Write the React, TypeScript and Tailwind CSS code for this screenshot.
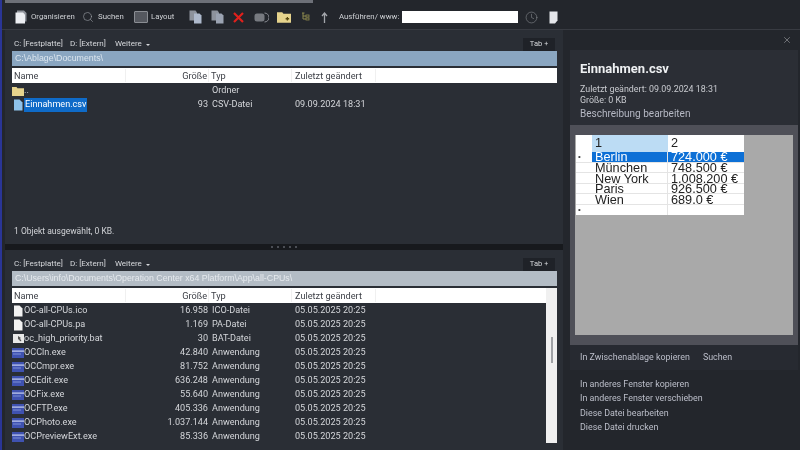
import { Clock, Search, X } from 'lucide-react'

type FileRow = {
  name: string
  size: string
  type: string
  date: string
  icon: 'page' | 'bat' | 'exe'
}

const lowerFiles: FileRow[] = [
  { name: 'OC-all-CPUs.ico', size: '16.958', type: 'ICO-Datei', date: '05.05.2025 20:25', icon: 'page' },
  { name: 'OC-all-CPUs.pa', size: '1.169', type: 'PA-Datei', date: '05.05.2025 20:25', icon: 'page' },
  { name: 'oc_high_priority.bat', size: '30', type: 'BAT-Datei', date: '05.05.2025 20:25', icon: 'bat' },
  { name: 'OCCln.exe', size: '42.840', type: 'Anwendung', date: '05.05.2025 20:25', icon: 'exe' },
  { name: 'OCCmpr.exe', size: '81.752', type: 'Anwendung', date: '05.05.2025 20:25', icon: 'exe' },
  { name: 'OCEdit.exe', size: '636.248', type: 'Anwendung', date: '05.05.2025 20:25', icon: 'exe' },
  { name: 'OCFix.exe', size: '55.640', type: 'Anwendung', date: '05.05.2025 20:25', icon: 'exe' },
  { name: 'OCFTP.exe', size: '405.336', type: 'Anwendung', date: '05.05.2025 20:25', icon: 'exe' },
  { name: 'OCPhoto.exe', size: '1.037.144', type: 'Anwendung', date: '05.05.2025 20:25', icon: 'exe' },
  { name: 'OCPreviewExt.exe', size: '85.336', type: 'Anwendung', date: '05.05.2025 20:25', icon: 'exe' },
]

const csvRows = [
  ['Berlin', '724.000 €'],
  ['München', '748.500 €'],
  ['New York', '1.008.200 €'],
  ['Paris', '926.500 €'],
  ['Wien', '689.0 €'],
]

function PageIcon({ color = '#f2f2f2' }: { color?: string }) {
  return (
    <svg width="10" height="12" viewBox="0 0 10 12" className="shrink-0">
      <path d="M1 0.5h5.5L9.5 3.5V11.5H1z" fill={color} />
    </svg>
  )
}

function BatIcon() {
  return (
    <svg width="11" height="9" viewBox="0 0 11 9" className="shrink-0">
      <rect width="11" height="9" fill="#e8e8e8" />
      <path d="M5 2l3 2-1 .6L8.5 7 7 7.3 5.8 5 5 6z" fill="#555" />
    </svg>
  )
}

function ExeIcon() {
  return (
    <svg width="12" height="10" viewBox="0 0 12 10" className="shrink-0">
      <rect width="12" height="10" fill="#3f52b0" />
      <rect y="2.5" width="12" height="1.2" fill="#c9d2f2" />
      <rect x="1" y="5.5" width="8" height="1" fill="#7f8fd6" />
    </svg>
  )
}

function FolderIcon({ plus = false, size = 12 }: { plus?: boolean; size?: number }) {
  return (
    <svg width={size} height={size - 2} viewBox="0 0 12 10" className="shrink-0">
      <path d="M0 1h4.5l1 1.3H12V10H0z" fill="#e6d38c" />
      {plus && <path d="M7.4 6.5h3M8.9 5v3" stroke="#5a4a10" strokeWidth="1.1" />}
    </svg>
  )
}

function CopyIcon({ tone = '#aeb9cc' }: { tone?: string }) {
  return (
    <svg width="13" height="14" viewBox="0 0 13 14" className="shrink-0">
      <path d="M0.5 0.5h6l1.5 2v8h-7.5z" fill="#8d929c" />
      <path d="M5 3.5h5.5l2 2v8H5z" fill={tone} />
    </svg>
  )
}

function PanelHeader({ path, pathClass }: { path: string; pathClass: string }) {
  return (
    <>
      <div className="flex h-[14px] items-center gap-[7px] px-[2px] text-[8px] text-[#d6d8dc]">
        <span>C: [Festplatte]</span>
        <span>D: [Extern]</span>
        <span className="ml-[2px] flex items-center gap-[4px]">
          Weitere
          <span className="mt-[1px] border-x-[2.5px] border-t-[2.5px] border-x-transparent border-t-[#d6d8dc]" />
        </span>
        <span className="ml-auto flex h-[13px] w-[32px] items-center justify-center gap-[2px] bg-[#1f2228] text-[7.5px]">
          Tab <span className="text-[7px]">+</span>
        </span>
      </div>
      <div
        className={`flex h-[15px] items-center pl-[3px] font-['Liberation_Sans',Arial,sans-serif] text-[8.8px] ${pathClass}`}
      >
        {path}
      </div>
    </>
  )
}

function ColumnHeader() {
  return (
    <div className="flex h-[15px] items-center bg-white text-[9.2px] text-[#3c3f46]">
      <span className="w-[114px] border-r border-[#f0f0f0] pl-[2px]">Name</span>
      <span className="w-[83px] border-r border-[#f0f0f0] pr-[1px] text-right">Größe</span>
      <span className="w-[83px] border-r border-[#f0f0f0] pl-[2px]">Typ</span>
      <span className="w-[84px] border-r border-[#f0f0f0] pl-[3px]">Zuletzt geändert</span>
    </div>
  )
}

function Row({ file }: { file: FileRow }) {
  return (
    <div className="flex h-[14px] items-center text-[9.1px] text-[#d4d6da]">
      <div className="flex w-[114px] items-center">
        <span className="flex w-[12px] justify-center">
          {file.icon === 'page' && <PageIcon />}
          {file.icon === 'bat' && <BatIcon />}
          {file.icon === 'exe' && <ExeIcon />}
        </span>
        <span className="whitespace-nowrap">{file.name}</span>
      </div>
      <span className="w-[83px] pr-[1px] text-right">{file.size}</span>
      <span className="w-[83px] pl-[3px]">{file.type}</span>
      <span className="pl-[3px]">{file.date}</span>
    </div>
  )
}

export default function App() {
  return (
    <div className="flex h-[450px] w-[800px] flex-col overflow-hidden border-l-2 border-[#2a3596] bg-[#23262c] font-['Roboto','Noto_Sans',sans-serif] blur-[0.3px]">
      <div className="ml-[3px] h-[3px] w-[308px] shrink-0 bg-[#6d7078]" />

      <header className="flex h-[27px] shrink-0 items-center border-b border-[#383b42] pl-[13px] pt-[2px] text-[7.8px] text-[#cfd1d5]">
        <svg width="12" height="14" viewBox="0 0 12 14" className="shrink-0">
          <path d="M2 0.5h7l2.5 2.5v8.5H2z" fill="#8f939b" />
          <path d="M0.5 2.5h7.5l2 2v9H0.5z" fill="#eceef2" />
        </svg>
        <span className="ml-[4px] w-[44px] whitespace-nowrap">Organisieren</span>
        <Search size={12} strokeWidth={1.2} className="ml-[7px] text-[#9ea1a7]" />
        <span className="ml-[4px] w-[26px]">Suchen</span>
        <span className="ml-[10px] h-[12px] w-[14px] rounded-[1px] border border-[#8a8d93] bg-[#55585f]" />
        <span className="ml-[3px] w-[24px]">Layout</span>
        <span className="ml-[14px] flex">
          <CopyIcon />
        </span>
        <span className="ml-[9px] flex">
          <CopyIcon tone="#9ba3b2" />
        </span>
        <svg width="11" height="11" viewBox="0 0 11 11" className="ml-[9px] shrink-0">
          <path d="M1 1l9 9M10 1l-9 9" stroke="#e0201c" strokeWidth="2.2" />
        </svg>
        <svg width="15" height="11" viewBox="0 0 15 11" className="ml-[10px] shrink-0">
          <rect x="0.5" y="1.5" width="10" height="8" rx="2.5" fill="#777a80" />
          <path d="M10.5 1a4 4 0 0 1 0 9" fill="none" stroke="#8b8e94" />
        </svg>
        <span className="ml-[8px] flex">
          <FolderIcon plus size={14} />
        </span>
        <svg width="9" height="10" viewBox="0 0 9 10" className="ml-[10px] shrink-0">
          <path d="M1 1h2.5M2 1v6h3M2 4h3" fill="none" stroke="#8f8a4e" />
          <rect x="5" y="3" width="3" height="2" fill="none" stroke="#8f8a4e" strokeWidth="0.8" />
          <rect x="5" y="6" width="3" height="2" fill="none" stroke="#8f8a4e" strokeWidth="0.8" />
        </svg>
        <svg width="7" height="11" viewBox="0 0 7 11" className="ml-[11px] shrink-0">
          <path d="M3.5 11V2M1 4l2.5-3L6 4" fill="none" stroke="#a3a6ab" strokeWidth="1.3" />
        </svg>
        <span className="ml-[11px] w-[59px] whitespace-nowrap">Ausführen/ www:</span>
        <span className="ml-[4px] h-[12px] w-[116px] bg-white" />
        <Clock size={13} strokeWidth={1.1} className="ml-[7px] text-[#85888e]" />
        <svg width="9" height="13" viewBox="0 0 9 13" className="ml-[11px] shrink-0">
          <path d="M0.5 0.5h8v9L6 12.5H0.5z" fill="#e4e6ea" />
        </svg>
      </header>

      <div className="flex min-h-0 flex-1">
        <main className="ml-[3px] flex w-[558px] shrink-0 flex-col">
          <section className="flex h-[214px] flex-col bg-[#2a2e35] pt-[7px] pl-[7px] pr-[6px]">
            <PanelHeader path="C:\Ablage\Documents\" pathClass="bg-[#8aa6c1] text-[#dce6ef]" />
            <div className="mt-[2px]">
              <ColumnHeader />
            </div>
            <div className="mt-[1px] flex h-[14px] items-center text-[9.1px] text-[#d4d6da]">
              <div className="flex w-[114px] items-center">
                <span className="flex w-[12px] justify-center">
                  <FolderIcon />
                </span>
                ..
              </div>
              <span className="w-[83px]" />
              <span className="pl-[3px]">Ordner</span>
            </div>
            <div className="flex h-[14px] items-center text-[9.1px] text-[#d4d6da]">
              <div className="flex w-[114px] items-center">
                <span className="flex w-[12px] justify-center">
                  <PageIcon color="#8ec2ea" />
                </span>
                <span className="bg-[#0f6bc8] px-[1px] text-white">Einnahmen.csv</span>
              </div>
              <span className="w-[83px] pr-[1px] text-right">93</span>
              <span className="w-[83px] pl-[3px]">CSV-Datei</span>
              <span className="pl-[3px]">09.09.2024 18:31</span>
            </div>
            <div className="mt-auto pb-[6px] pl-[2px] text-[8.5px] text-[#d2d4d8]">1 Objekt ausgewählt, 0 KB.</div>
          </section>

          <div className="flex h-[6px] shrink-0 items-center justify-center gap-[4px] bg-[#17191d]">
            {[0, 1, 2, 3, 4].map((dot) => (
              <span key={dot} className="size-[2px] bg-[#4b4e55]" />
            ))}
          </div>

          <section className="flex min-h-0 flex-1 flex-col bg-[#2a2e35] pt-[7px] pl-[7px] pr-[6px]">
            <PanelHeader
              path="C:\Users\info\Documents\Operation Center x64 Platform\App\all-CPUs\"
              pathClass="bg-[#b3bcc5] text-[#e6eaee]"
            />
            <div className="mt-[2px] flex min-h-0 flex-1">
              <div className="w-[534px] overflow-hidden">
                <ColumnHeader />
                <div className="mt-[1px]">
                  {lowerFiles.map((file) => (
                    <Row key={file.name} file={file} />
                  ))}
                </div>
              </div>
              <div className="mb-[7px] flex w-[11px] flex-col items-center bg-[#f0f0f0] pt-[49px]">
                <span className="h-[26px] w-[2px] bg-[#9fa1a5]" />
              </div>
            </div>
          </section>
        </main>

        <aside className="ml-[2px] flex min-w-0 flex-1 flex-col pl-[5px]">
          <div className="flex h-[20px] items-center justify-end pr-[8px] text-[#b0b2b6]">
            <X size={10} strokeWidth={1.3} />
          </div>
          <div className="mr-[2px] flex h-[320px] flex-col bg-[#2b2e35]">
            <div className="flex h-[75px] flex-col pl-[10px] pt-[9px] text-[8.9px] text-[#c9cbd0]">
              <h1 className="text-[13px] leading-[20px] font-bold text-[#eef0f2]">Einnahmen.csv</h1>
              <p className="mt-[5px] leading-[11px]">Zuletzt geändert: 09.09.2024 18:31</p>
              <p className="leading-[11px]">Größe: 0 KB</p>
              <p className="mt-[1px] text-[10px] leading-[13px] text-[#b6b9c4]">Beschreibung bearbeiten</p>
            </div>
            <div className="h-[220px] bg-[#4f5058] px-[5px] pt-[10px]">
              <div className="h-[200px] bg-[#a9a9a9] pl-[1px]">
                <div className="w-[168px] bg-white font-['Liberation_Sans',Arial,sans-serif] text-[12.7px] text-[#222]">
                  <div className="flex h-[17px] items-center">
                    <span className="h-full w-[16px]" />
                    <span className="flex h-full w-[76px] items-center bg-[#bcdcf4] pl-[3px] pt-[1px]">1</span>
                    <span className="pl-[3px] pt-[1px]">2</span>
                  </div>
                  {csvRows.map(([city, value], index) => (
                    <div
                      key={city}
                      className={`flex h-[10.6px] items-center border-b border-[#e4e4e4] leading-none ${
                        index === 0 ? 'bg-white text-white' : ''
                      }`}
                    >
                      <span className="flex h-full w-[16px] items-center pl-[2px] text-[8px] text-[#444]">
                        {index === 0 ? '•' : ''}
                      </span>
                      <span
                        className={`flex h-full w-[76px] items-center border-r border-[#e4e4e4] pl-[3px] pt-[2px] ${
                          index === 0 ? 'bg-[#0d70d6]' : ''
                        }`}
                      >
                        {city}
                      </span>
                      <span
                        className={`flex h-full flex-1 items-center pl-[3px] pt-[2px] ${
                          index === 0 ? 'bg-[#0d70d6]' : ''
                        }`}
                      >
                        {value}
                      </span>
                    </div>
                  ))}
                  <div className="flex h-[10px] items-center">
                    <span className="flex h-full w-[16px] items-center pl-[2px] text-[8px] text-[#444]">•</span>
                    <span className="h-full w-[76px] border-r border-[#e4e4e4]" />
                  </div>
                </div>
              </div>
            </div>
            <div className="flex flex-1 items-center gap-[13px] bg-[#272a31] pl-[10px] text-[8.9px] text-[#bcbfca]">
              <span>In Zwischenablage kopieren</span>
              <span>Suchen</span>
            </div>
          </div>
          <nav className="mt-[7px] flex flex-col pl-[10px] text-[8.9px] leading-[14.4px] text-[#bcbfca]">
            <span>In anderes Fenster kopieren</span>
            <span>In anderes Fenster verschieben</span>
            <span>Diese Datei bearbeiten</span>
            <span>Diese Datei drucken</span>
          </nav>
        </aside>
      </div>
    </div>
  )
}
